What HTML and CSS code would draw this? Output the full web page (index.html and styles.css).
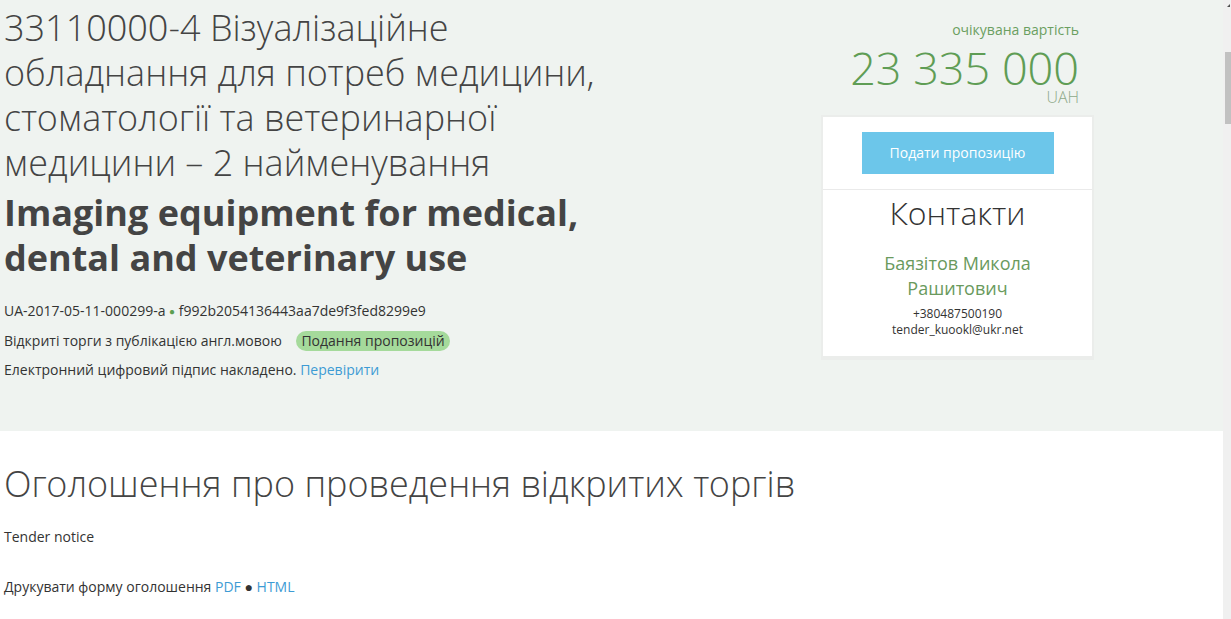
FILE: index.html
```html
<!DOCTYPE html>
<html lang="uk">
<head>
	<meta charset="UTF-8">
	<title>33110000-4 Візуалізаційне обладнання</title>
	<link rel="stylesheet" href="styles.css">
</head>
<body>
	<div class="page">
		<!-- шапка закупівлі -->
		<div class="tender-head">
			<div class="head-main">
				<h1 class="title">33110000-4 Візуалізаційне обладнання для потреб медицини, стоматології та ветеринарної медицини – 2 найменування</h1>
				<h2 class="title-en">Imaging equipment for medical, dental and veterinary use</h2>
				<div class="meta">
					<p>UA-2017-05-11-000299-a <span class="dot">●</span> f992b2054136443aa7de9f3fed8299e9</p>
					<p>Відкриті торги з публікацією англ.мовою <span class="status">Подання пропозицій</span></p>
					<p>Електронний цифровий підпис накладено. <a href="#">Перевірити</a></p>
				</div>
			</div>
			<div class="head-side">
				<div class="price">
					<div class="price-label">очікувана вартість</div>
					<div class="price-value">23 335 000</div>
					<div class="price-cur">UAH</div>
				</div>
				<div class="card">
					<div class="card-btn">
						<a class="btn-bid" href="#">Подати пропозицію</a>
					</div>
					<div class="contacts">
						<h3>Контакти</h3>
						<div class="contact-name">Баязітов Микола Рашитович</div>
						<div class="contact-line">+380487500190</div>
						<div class="contact-line">tender_kuookl@ukr.net</div>
					</div>
				</div>
			</div>
		</div>
		<!-- оголошення -->
		<div class="notice">
			<h2>Оголошення про проведення відкритих торгів</h2>
			<p>Tender notice</p>
			<p class="print">Друкувати форму оголошення <a href="#">PDF</a> ● <a href="#">HTML</a></p>
		</div>
	</div>
	<!-- смуга прокрутки -->
	<div class="scrollbar">
		<span class="arrow"></span>
		<span class="thumb"></span>
	</div>
</body>
</html>
```

FILE: styles.css
```css
html,
body{
	margin: 0;
	padding: 0;
	height: 100%;
	overflow: hidden;
}
body{
	font-family: "Open Sans", "Noto Sans", sans-serif;
	font-size: 14px;
	color: #333;
	background-color: #fff;
}
a{
	color: #3d9bd4;
	text-decoration: none;
}
.light{
	font-family: "Open Sans Light", "Open Sans", "Noto Sans", sans-serif;
}
.page{
	width: 1223px;
}
.tender-head{
	display: flex;
	background-color: #eff3f0;
	height: 431px;
	box-sizing: border-box;
}
.head-main{
	width: 817px;
	padding-left: 4px;
	box-sizing: border-box;
}
.title,
.price-value,
.price-cur,
.contacts h3,
.notice h2{
	font-family: "Open Sans Light", "Open Sans", "Noto Sans", sans-serif;
	font-weight: 300;
}
.title{
	width: 600px;
	margin: 0;
	padding-top: 5px;
	font-size: 36px;
	line-height: 45px;
	color: #444;
}
.title-en{
	width: 600px;
	margin: 0;
	padding-top: 5px;
	font-size: 36px;
	font-weight: 700;
	line-height: 45px;
	color: #444;
}
.meta{
	margin-top: 16px;
}
.meta p{
	margin: 0;
	line-height: 30px;
}
.meta p:last-child{
	margin-top: -1px;
}
.dot{
	color: #5c9e50;
	font-size: 10px;
	vertical-align: 1px;
}
.status{
	display: inline-block;
	margin-left: 11px;
	padding: 0 5px;
	line-height: 20px;
	border-radius: 10px;
	background-color: #a5da9b;
	color: #333;
}
.head-side{
	width: 273px;
	margin-left: 4px;
}
.price{
	text-align: right;
	padding: 20px 15px 0 0;
	color: #5f9d55;
}
.price-label{
	font-size: 14px;
	line-height: 20px;
	color: #6b9f61;
}
.price-value{
	font-size: 45px;
	line-height: 42px;
	margin-top: 7px;
}
.price-cur{
	font-size: 16px;
	line-height: 12px;
	margin-top: 2px;
	color: #8da989;
}
.card{
	margin-top: 12px;
	background-color: #fff;
	border: 2px solid #ebedeb;
	border-bottom-width: 4px;
	text-align: center;
}
.card-btn{
	padding: 15px 0 15px;
	border-bottom: 1px solid #eaeaea;
}
.btn-bid{
	display: inline-block;
	width: 192px;
	line-height: 42px;
	background-color: #6cc6ea;
	color: #fff;
	font-size: 14px;
}
.contacts{
	padding: 0 20px 18px;
}
.contacts h3{
	margin: 0;
	font-size: 32px;
	line-height: 46px;
	color: #333;
}
.contact-name{
	margin: 15px 0 5px;
	font-size: 18px;
	line-height: 25px;
	color: #6a9a5d;
	padding: 0 30px;
}
.contact-line{
	font-size: 12px;
	line-height: 16px;
	color: #333;
}
.notice{
	padding-left: 4px;
}
.notice h2{
	margin: 0;
	padding-top: 30px;
	font-size: 36px;
	line-height: 46px;
	color: #444;
}
.notice p{
	margin: 20px 0 0;
	line-height: 20px;
}
.notice .print{
	margin-top: 30px;
}
.scrollbar{
	position: fixed;
	top: 0;
	right: 0;
	width: 8px;
	height: 100%;
	background-color: #f0f0f0;
}
.scrollbar .arrow{
	position: absolute;
	top: 4px;
	right: 1px;
	width: 0;
	height: 0;
	border-left: 3px solid transparent;
	border-bottom: 3px solid #505050;
}
.scrollbar .thumb{
	position: absolute;
	top: 52px;
	right: 0;
	width: 6px;
	height: 72px;
	background-color: #c1c1c1;
}
```
